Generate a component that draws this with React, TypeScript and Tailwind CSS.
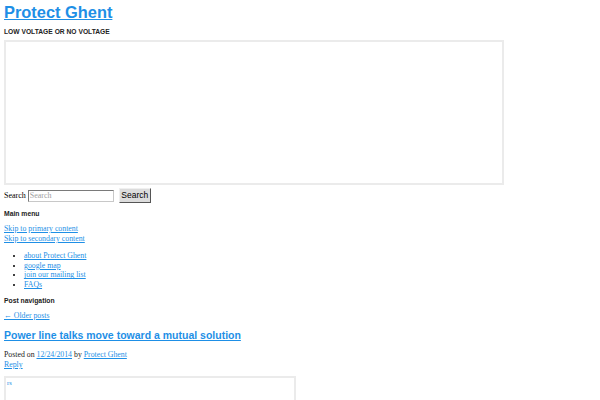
import React from "react";

const link = "text-[#1e8fe6] underline";

export default function App() {
  return (
    <div className="w-[600px] h-[400px] overflow-hidden bg-white text-[#333] px-[4px] pt-[2px]" style={{ fontFamily: '"Liberation Serif", serif' }}>
      <h1 className="text-[16.4px] leading-[20px] font-bold" style={{ fontFamily: '"Liberation Sans", Arial, sans-serif' }}>
        <a href="#" className="text-[#1e8fe6] underline">Protect Ghent</a>
      </h1>
      <h2 className="mt-[5px] text-[6.7px] leading-[9px] font-bold text-[#222]" style={{ fontFamily: '"Liberation Sans", Arial, sans-serif' }}>
        LOW VOLTAGE OR NO VOLTAGE
      </h2>
      <div className="mt-[4px] w-[500px] h-[145px] border-2 border-[#ebebeb]" />
      <div className="mt-[3px] flex items-center h-[15px] text-[8px]">
        <span className="text-black">Search</span>
        <input
          placeholder="Search"
          className="ml-[2px] w-[86px] h-[12px] border border-t-[#7a7a7a] border-l-[#7a7a7a] border-r-[#c8c8c8] border-b-[#c8c8c8] px-[1px] text-[8px] placeholder:text-[#a0a0a0] outline-none"
          style={{ fontFamily: '"Liberation Serif", serif' }}
        />
        <button
          className="ml-[5px] w-[32px] h-[15px] bg-[#dcdcdc] border border-t-[#f0f0f0] border-l-[#f0f0f0] border-r-[#555] border-b-[#555] text-[8.5px] text-black leading-none"
          style={{ fontFamily: '"Liberation Sans", Arial, sans-serif' }}
        >
          Search
        </button>
      </div>
      <h3 className="mt-[7px] text-[6.8px] leading-[8px] font-bold text-[#222]" style={{ fontFamily: '"Liberation Sans", Arial, sans-serif' }}>
        Main menu
      </h3>
      <div className="mt-[6px] text-[7.8px] leading-[10px]">
        <div><a href="#" className={link}>Skip to primary content</a></div>
        <div><a href="#" className={link}>Skip to secondary content</a></div>
      </div>
      <ul className="mt-[7px] pl-[20px] list-disc text-[7.8px] leading-[9.67px] text-black">
        <li><a href="#" className={link}>about Protect Ghent</a></li>
        <li><a href="#" className={link}>google map</a></li>
        <li><a href="#" className={link}>join our mailing list</a></li>
        <li><a href="#" className={link}>FAQs</a></li>
      </ul>
      <h3 className="mt-[7px] text-[6.8px] leading-[8px] font-bold text-[#222]" style={{ fontFamily: '"Liberation Sans", Arial, sans-serif' }}>
        Post navigation
      </h3>
      <div className="mt-[6px] text-[7.8px] leading-[10px]">
        <a href="#" className={link}>← Older posts</a>
      </div>
      <h1 className="mt-[8.5px] text-[10.5px] leading-[13px] font-bold" style={{ fontFamily: '"Liberation Sans", Arial, sans-serif' }}>
        <a href="#" className={link}>Power line talks move toward a mutual solution</a>
      </h1>
      <div className="mt-[7.5px] text-[7.8px] leading-[10px] text-[#222]">
        <div>
          Posted on <a href="#" className={link}>12/24/2014</a> by <a href="#" className={link}>Protect Ghent</a>
        </div>
        <div><a href="#" className={link}>Reply</a></div>
      </div>
      <div className="mt-[6px] w-[292px] h-[60px] border-2 border-[#ebebeb] pl-[1px] pt-[1px]">
        <span className="text-[6.5px] leading-[8px] text-[#1e8fe6] block">rs</span>
      </div>
    </div>
  );
}
